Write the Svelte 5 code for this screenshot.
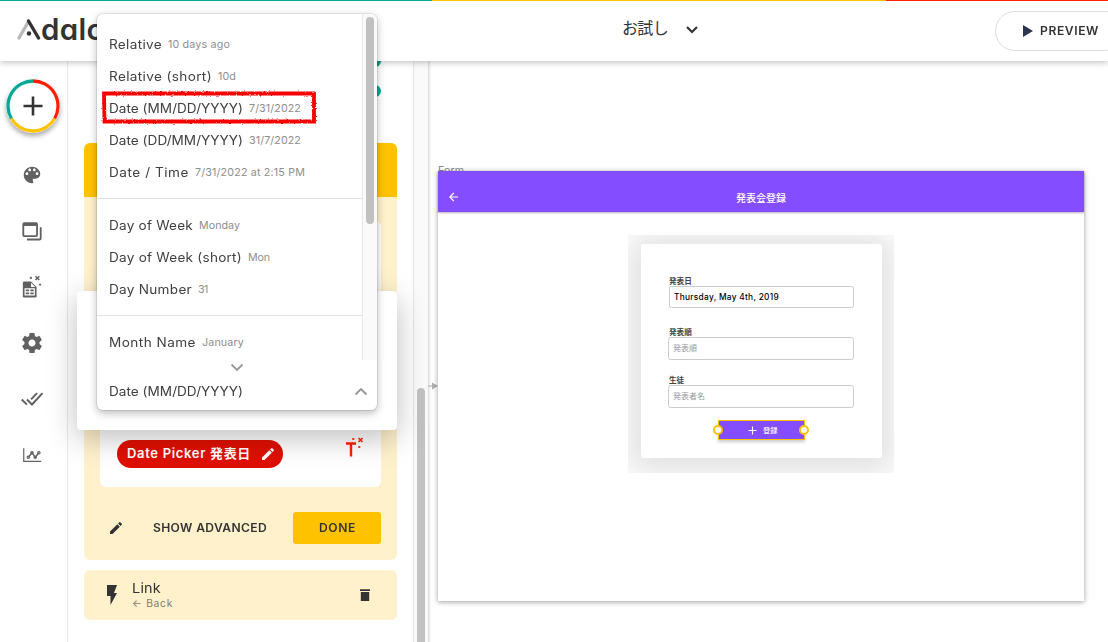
<script>
  const groups = [
    [
      { name: 'Relative', w: 53, hint: '10 days ago', hw: 62 },
      { name: 'Relative (short)', w: 103, hint: '10d', hw: 18 },
      { name: 'Date (MM/DD/YYYY)', w: 134, hint: '7/31/2022', hw: 52 },
      { name: 'Date (DD/MM/YYYY)', w: 134, hint: '31/7/2022', hw: 52 },
      { name: 'Date / Time', w: 80, hint: '7/31/2022 at 2:15 PM', hw: 110 }
    ],
    [
      { name: 'Day of Week', w: 84, hint: 'Monday', hw: 41 },
      { name: 'Day of Week (short)', w: 133, hint: 'Mon', hw: 22 },
      { name: 'Day Number', w: 83, hint: '31', hw: 10 }
    ],
    [{ name: 'Month Name', w: 87, hint: 'January', hw: 42 }]
  ];

  // Tracks a label so that it fills the given width.
  function fit(node, width) {
    node.style.letterSpacing = '0px';
    const natural = node.getBoundingClientRect().width;
    const n = [...node.textContent].length;
    node.style.letterSpacing = `${(width - natural) / n}px`;
  }

  // Same, with slightly extended letterforms.
  function wide(node, width) {
    const stretch = 1.07;
    fit(node, width / stretch);
    node.style.display = 'inline-block';
    node.style.width = `${width}px`;
    node.style.transformOrigin = '0 50%';
    node.style.transform = `scaleX(${stretch})`;
  }
</script>

<div class="app">
  <header>
    <div class="stripe"><i></i><i></i><i></i></div>
    <div class="bar">
      <div class="logo">
        <svg width="26" height="26" viewBox="0 0 26 26" fill="none" stroke-linecap="round" stroke-width="3.4">
          <path d="M3 22 12 6.500" stroke="#b9b9b9" />
          <path d="M12.500 5 22.500 22" stroke="#333" />
          <circle cx="13" cy="17.500" r="2.200" fill="#333" />
        </svg>
        <span>dalo</span>
      </div>
      <div class="project">
        <span use:fit={46}>お試し</span>
        <svg width="14" height="10" viewBox="0 0 14 10"><path d="M2 2 7 7 12 2" fill="none" stroke="#333" stroke-width="2.2" /></svg>
      </div>
      <div class="preview">
        <svg width="10" height="12" viewBox="0 0 10 12"><path d="M0 0 10 6 0 12Z" fill="#2d3450" /></svg>
        <span use:wide={59}>PREVIEW</span>
      </div>
    </div>
  </header>

  <main>
    <nav>
      <div class="add">
        <svg width="54" height="54" viewBox="0 0 54 54" fill="none" stroke-width="3.300">
          <circle cx="27" cy="27" r="25" fill="#fff" />
          <path d="M27 2A25 25 0 0 1 48.650 39.500" stroke="#ff1f00" />
          <path d="M48.650 39.500A25 25 0 0 1 5.350 39.500" stroke="#ffc200" />
          <path d="M5.350 39.500A25 25 0 0 1 27 2" stroke="#00a898" />
          <path d="M27 17.500V36.500M17.500 27H36.500" stroke="#333" stroke-width="2.600" />
        </svg>
      </div>
      <svg class="ic" viewBox="0 0 24 24"><path fill="#616161" d="M12 3c-4.970 0-9 4.030-9 9s4.030 9 9 9c.83 0 1.500-.67 1.500-1.500 0-.39-.15-.74-.39-1.010-.23-.26-.38-.61-.38-.99 0-.83.67-1.500 1.500-1.500H16c2.760 0 5-2.240 5-5 0-4.420-4.030-8-9-8zm-5.500 9c-.83 0-1.500-.67-1.500-1.500S5.670 9 6.500 9 8 9.670 8 10.500 7.330 12 6.500 12zm3-4C8.670 8 8 7.330 8 6.500S8.670 5 9.500 5s1.500.67 1.500 1.500S10.330 8 9.500 8zm5 0c-.83 0-1.500-.67-1.500-1.500S13.670 5 14.500 5s1.500.67 1.500 1.500S15.330 8 14.500 8zm3 4c-.83 0-1.500-.67-1.500-1.500S16.670 9 17.500 9s1.500.67 1.500 1.500-.67 1.500-1.500 1.500z" /></svg>
      <svg class="ic" viewBox="0 -1 24 24" fill="none" stroke="#616161" stroke-width="2"><rect x="2.500" y="2.500" width="15" height="14" rx="1" /><path d="M3 4H17" stroke-width="3" /><path d="M21.500 7V18.800Q21.500 20.300 20 20.300H6.500" /></svg>
      <svg class="ic" viewBox="0 -1 24 24"><path fill="#616161" d="M3.500 5H11L17 11V21Q17 22.500 15.500 22.500H3.500Q2 22.500 2 21V6.500Q2 5 3.500 5Z" /><path d="M11 6.500V11H15.500Z" fill="#fff" /><path d="M4.500 13H14.500V19.500H4.500ZM4.500 16.250H14.500M9.500 13V19.500" fill="none" stroke="#fff" stroke-width="1.300" /><path d="M15.800-.8 20 3.400M20-.8 15.800 3.400" stroke="#616161" stroke-width="1.600" /><path d="M9.500 1H12M10.750 -.25V2.250M19.500 8.500H22M20.750 7.250V9.750" stroke="#616161" stroke-width="1.200" /></svg>
      <svg class="ic" viewBox="0 0 24 24"><path fill="#616161" transform="translate(-1.200 -1.200) scale(1.100)" d="M19.430 12.980c.04-.32.07-.64.07-.98s-.03-.66-.07-.98l2.110-1.650c.19-.15.24-.42.12-.64l-2-3.460c-.12-.22-.39-.3-.61-.22l-2.490 1c-.52-.4-1.080-.73-1.690-.98l-.38-2.650C14.460 2.180 14.250 2 14 2h-4c-.25 0-.46.18-.49.42l-.38 2.650c-.61.25-1.170.59-1.690.98l-2.490-1c-.23-.09-.49 0-.61.22l-2 3.460c-.13.22-.07.49.12.64l2.110 1.650c-.04.32-.07.65-.07.98s.03.66.07.98l-2.110 1.650c-.19.15-.24.42-.12.64l2 3.460c.12.22.39.3.61.22l2.490-1c.52.4 1.080.73 1.690.98l.38 2.650c.03.24.24.42.49.42h4c.25 0 .46-.18.49-.42l.38-2.650c.61-.25 1.170-.59 1.690-.98l2.490 1c.23.09.49 0 .61-.22l2-3.460c.12-.22.07-.49-.12-.64l-2.110-1.650zM12 15.500c-1.930 0-3.500-1.570-3.500-3.500s1.570-3.500 3.500-3.500 3.500 1.570 3.500 3.500-1.570 3.500-3.500 3.500z" /></svg>
      <svg class="ic" viewBox="0 0 24 24" fill="none" stroke="#616161" stroke-width="2.100"><path d="M.8 12.500 6.500 18.200M6.500 12.500 12 18 23.500 5.500M11 12.500 17.500 5.500" /></svg>
      <svg class="ic" viewBox="0 -.5 24 24" fill="none" stroke="#616161" stroke-width="1.300"><path d="M3 4V18.500H22" /><path d="M8 14 12 9 15.500 14 19.500 9" stroke-width="1.500" /><circle cx="8" cy="14" r="1.300" /><circle cx="12" cy="9" r="1.300" /><circle cx="15.500" cy="14" r="1.300" /><circle cx="19.500" cy="9" r="1.300" /></svg>
    </nav>

    <section class="panel">
      <div class="dots"><i></i><i></i></div>
      <div class="action">
        <div class="head"></div>
        <div class="body">
          <div class="field">
            <div class="cap">発表日</div>
            <div class="value">
              <div class="pill">
                <span use:fit={124}>Date Picker 発表日</span>
                <svg width="16" height="16" viewBox="0 0 24 24"><path fill="#fff" d="M3 17.250V21h3.750L17.810 9.940l-3.750-3.750L3 17.250zM20.710 7.040a1 1 0 0 0 0-1.410l-2.340-2.340a1 1 0 0 0-1.410 0l-1.830 1.830 3.750 3.750z" /></svg>
              </div>
              <svg class="magic" width="20" height="22" viewBox="0 0 20 22" fill="none" stroke="#ff1f00"><path d="M1 7.500H11M6 7.500V20.500" stroke-width="2.400" /><path d="M13.500 2 17.500 6M17.500 2 13.500 6" stroke-width="1.500" /><path d="M7 3H9.500M8.250 2V4M13 11H15.500M14.250 10V12" stroke-width="1.100" /></svg>
            </div>
          </div>
          <div class="buttons">
            <svg width="16" height="16" viewBox="0 0 24 24"><path fill="#333" d="M3 17.250V21h3.750L17.810 9.940l-3.750-3.750L3 17.250zM20.710 7.040a1 1 0 0 0 0-1.410l-2.340-2.340a1 1 0 0 0-1.410 0l-1.830 1.830 3.750 3.750z" /></svg>
            <b class="adv"><span use:wide={114}>SHOW ADVANCED</span></b>
            <b class="done"><span use:wide={37}>DONE</span></b>
          </div>
        </div>
      </div>
      <div class="link">
        <svg width="12" height="20" viewBox="0 0 12 20"><path d="M1 0H11L8 8H11L4.500 20V11H1Z" fill="#333" /></svg>
        <div class="what"><span class="t" use:wide={29}>Link</span><span class="s" use:fit={41}>← Back</span></div>
        <svg width="10" height="12" viewBox="0 0 10 12"><path d="M0 .3H10V2H0ZM.8 3H9.200V12H.8Z" fill="#333" /></svg>
      </div>
    </section>

    <div class="track"><i></i></div>

    <section class="canvas">
      <svg class="conn" width="11" height="8" viewBox="0 0 11 8"><path d="M0 4H6" stroke="#b5b5b5" stroke-width="1.200" /><path d="M4 .5 10 4 4 7.500Z" fill="#b0b0b0" /></svg>
      <div class="label"><span use:fit={26}>Form</span></div>
      <div class="screen">
        <div class="appbar">
          <svg width="10" height="10" viewBox="0 0 10 10"><path d="M9 5H1M4.800 1 .8 5 4.800 9" fill="none" stroke="#fff" stroke-width="1.100" /></svg>
          <span>発表会登録</span>
        </div>
        <div class="shade">
          <div class="form">
            <label for="f1">発表日</label>
            <div id="f1" class="input date"><span use:fit={105}>Thursday, May 4th, 2019</span></div>
            <label for="f2">発表順</label>
            <div id="f2" class="input order">発表順</div>
            <label for="f3">生徒</label>
            <div id="f3" class="input">発表者名</div>
            <div class="submit">
              <i></i>
              <svg width="9" height="9" viewBox="0 0 9 9"><path d="M4.500 .5V8.500M.5 4.500H8.500" stroke="#fff" stroke-width="1.100" /></svg>
              <span>登録</span>
              <i class="r"></i>
            </div>
          </div>
        </div>
      </div>
    </section>
  </main>

  <div class="modal"></div>
  <div class="menu">
    <div class="scroller">
      <div class="list">
        {#each groups as group}
          <div class="group">
            {#each group as item}
              <div class="item"><span class="n" use:wide={item.w}>{item.name}</span><span class="h" use:fit={item.hw}>{item.hint}</span></div>
            {/each}
          </div>
        {/each}
      </div>
      <div class="mtrack"><i></i></div>
    </div>
    <div class="more"><svg width="14" height="9" viewBox="0 0 14 9"><path d="M1.500 1.500 7 7 12.500 1.500" fill="none" stroke="#999" stroke-width="1.900" /></svg></div>
    <div class="chosen">
      <span class="n" use:wide={134}>Date (MM/DD/YYYY)</span>
      <svg width="14" height="9" viewBox="0 0 14 9"><path d="M1.500 7.500 7 2 12.500 7.500" fill="none" stroke="#999" stroke-width="1.900" /></svg>
    </div>
  </div>

  <svg class="mark" width="222" height="40" viewBox="0 0 222 40">
    <filter id="rough" x="-5%" y="-20%" width="110%" height="140%"><feTurbulence type="fractalNoise" baseFrequency=".45" numOctaves="2" seed="4" /><feDisplacementMap in="SourceGraphic" scale="2.500" xChannelSelector="R" yChannelSelector="G" /></filter>
    <path d="M6 6.500 216 6.500 216 34.500 6.500 34.500Z" fill="none" stroke="#f70000" stroke-width="3.800" filter="url(#rough)" />
  </svg>
</div>

<style>
  :global(body) { background: #fff; overflow: hidden; }
  .app { position: relative; width: 1108px; height: 642px; overflow: hidden; display: flex; flex-direction: column; font-family: Inter, 'Noto Sans CJK JP', sans-serif; color: #333; background: #fff; }
  .app :global(*) { box-sizing: border-box; }
  span { white-space: nowrap; }
  svg { display: block; flex: none; overflow: visible; }

  header { height: 61px; flex: none; background: #fff; box-shadow: 0 1px 7px rgba(0, 0, 0, .28); position: relative; z-index: 2; }
  .stripe { display: grid; grid-template-columns: 432px 454px 1fr; height: 1px; }
  .stripe i { background: #00a898; }
  .stripe i:nth-child(2) { background: #ffc200; }
  .stripe i:nth-child(3) { background: #ff1f00; }
  .bar { display: flex; height: 60px; }
  .logo { display: flex; flex: none; width: 622px; padding: 15px 0 0 16px; }
  .logo span { font-size: 29.500px; line-height: 27px; font-weight: 600; font-feature-settings: 'cv11'; letter-spacing: .3px; margin-left: -1px; }
  .project { display: flex; flex: none; align-items: center; width: 373px; gap: 17px; height: 54px; font-size: 16px; }
  .project span { margin-top: -2px; }
  .project svg { margin-top: 3px; }
  .preview { flex: none; width: 130px; height: 40px; margin-top: 10px; border: 1px solid #ddd; border-radius: 20px; display: flex; align-items: center; padding-left: 27px; gap: 7px; font-size: 11.300px; font-weight: 600; }

  main { flex: 1; display: grid; grid-template-columns: 68px 345px 16px 1fr; min-height: 0; }
  nav { border-right: 1px solid #e8e8e8; display: flex; flex-direction: column; align-items: center; padding: 18px 4px 0 0; }
  .add { width: 54px; height: 54px; border-radius: 50%; box-shadow: 0 3px 5px rgba(0, 0, 0, .35); margin-bottom: 31px; margin-left: 2px; }
  .ic { width: 22px; height: 22px; margin-bottom: 34px; }

  .panel { padding-left: 16px; }
  .dots { height: 82px; padding: 0 0 0 285px; display: flex; flex-direction: column; gap: 18px; }
  .dots i { width: 12px; height: 12px; border-radius: 50%; background: #00a898; flex: none; }
  .dots i:first-child { margin-top: -6px; }
  .action { width: 313px; height: 417px; border-radius: 6px; overflow: hidden; background: #fff1cc; display: flex; flex-direction: column; }
  .head { height: 54px; background: #ffc200; flex: none; }
  .body { padding: 24px 16px 16px; display: flex; flex-direction: column; }
  .field { height: 266px; background: #fff; border-radius: 6px; padding: 195px 16px 0 17px; }
  .cap { font-size: 11px; line-height: 16px; color: #777; }
  .value { display: flex; justify-content: space-between; padding-top: 8px; }
  .pill { width: 166px; height: 28px; border-radius: 14px; background: #df1000; color: #fff; display: flex; align-items: center; padding-left: 10px; gap: 9px; font-size: 13px; font-weight: 600; }
  .pill span { margin-top: -3px; }
  .magic { margin: -4px 0 0; }
  .buttons { display: flex; align-items: center; height: 32px; margin-top: 25px; padding-left: 8px; font-size: 11.300px; }
  b { font-weight: 600; }
  .adv { margin-left: 29px; width: 140px; }
  .done { width: 88px; height: 32px; line-height: 32px; background: #ffc200; border-radius: 3px; text-align: center; }
  .done span { text-align: left; }
  .link { width: 313px; height: 50px; margin-top: 10px; border-radius: 6px; background: #fff1cc; display: flex; align-items: center; padding: 0 27px 0 22px; }
  .what { display: flex; flex-direction: column; align-items: flex-start; margin-left: 14px; flex: 1; }
  .t { font-size: 13.500px; line-height: 16px; }
  .s { font-size: 10.300px; line-height: 14px; color: #827c6c; }

  .track { border-left: 1px solid #e4e4e4; border-right: 1px solid #e0e0e0; background: #fafafa; padding: 327px 0 0 3px; box-shadow: 1px 0 2px rgba(0, 0, 0, .1); }
  .track i { display: block; width: 8px; height: 300px; border-radius: 4px; background: #c2c2c2; }

  .canvas { padding: 102px 0 0 9px; position: relative; }
  .conn { position: absolute; left: -1px; top: 321px; }
  .label { height: 8px; overflow: visible; font-size: 10.500px; line-height: 15px; color: #888; }
  .screen { position: relative; width: 646px; height: 430px; background: #fff; box-shadow: 0 1px 5px rgba(0, 0, 0, .4); }
  .appbar { height: 41px; background: #844dff; box-shadow: 0 1px 2px rgba(0, 0, 0, .3); display: grid; grid-template-columns: 10px 1fr 10px; align-items: center; padding: 11px 11px 0; color: #fff; font-size: 10px; text-align: center; font-weight: 500; }
  .appbar span { font-family: 'Noto Sans CJK JP', sans-serif; line-height: 14px; padding-top: 1px; }
  .shade { margin: 23px 0 0 190px; width: 266px; height: 238px; overflow: hidden; padding: 9px 12px 0 13px; }
  .form { height: 214px; border-radius: 3px; background: #fff; box-shadow: 0 3px 32px 12px rgba(0, 0, 0, .12); padding: 33px 28px 0 27px; display: flex; flex-direction: column; }
  label { font-size: 7.600px; line-height: 10px; height: 9px; flex: none; font-weight: 600; color: #444; padding-left: 1px; }
  .input { height: 23px; flex: none; border: 1px solid #ccc; border-radius: 2.500px; font-size: 8px; line-height: 21px; padding-left: 4px; color: #999; margin-bottom: 12px; }
  .input.date { height: 22px; color: #000; font-weight: 500; font-size: 8.300px; margin: 0 0 20px 1px; }
  .input.order { margin-bottom: 16px; }
  .submit { position: relative; width: 87px; height: 20px; flex: none; margin-left: 50px; background: #844dff; border: 1px solid #ffc200; display: flex; align-items: center; padding-left: 29px; gap: 6px; color: #fff; font-size: 7.300px; font-weight: 500; box-shadow: 0 2px 3px rgba(0, 0, 0, .2); }
  .submit i { position: absolute; left: -6px; top: 4px; width: 10px; height: 10px; border-radius: 50%; background: #fff; border: 2px solid #ffc200; }
  .submit i.r { left: 80px; }

  .modal { position: absolute; left: 77px; top: 291px; width: 320px; height: 139px; border-radius: 4px; background: #fff; box-shadow: 0 8px 30px rgba(0, 0, 0, .26); z-index: 3; }
  .menu { position: absolute; z-index: 4; left: 97px; top: 14px; width: 280px; height: 396px; border-radius: 6px; background: #fff; box-shadow: 0 0 0 1px rgba(0, 0, 0, .08), 0 3px 9px rgba(0, 0, 0, .28); display: flex; flex-direction: column; overflow: hidden; }
  .scroller { display: flex; height: 346px; flex: none; overflow: hidden; }
  .list { flex: 1; padding-top: 4px; }
  .group { padding: 10px 0; border-bottom: 1px solid #e2e2e2; }
  .group:last-child { border: 0; }
  .item { height: 32px; display: flex; align-items: center; padding-left: 12px; }
  .n { font-size: 12.700px; color: #404040; }
  .h { font-size: 10.700px; color: #8e8e8e; margin-left: 6px; }
  .mtrack { width: 15px; background: #fafafa; border-left: 1px solid #e8e8e8; padding: 3px 0 0 3px; }
  .mtrack i { display: block; width: 8px; height: 207px; border-radius: 4px; background: #c1c1c1; }
  .more { height: 15px; display: flex; justify-content: center; padding-top: 3px; }
  .chosen { height: 32px; display: flex; align-items: center; justify-content: space-between; padding: 0 9px 2px 12px; margin-top: 1px; }
  .mark { position: absolute; z-index: 5; left: 98px; top: 87px; }
</style>
